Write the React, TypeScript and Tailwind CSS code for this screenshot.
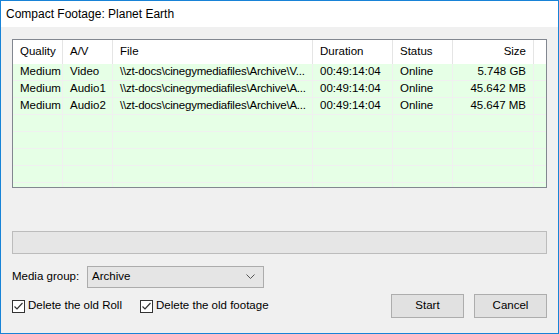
import React from 'react';

const cols = [
  { name: 'Quality', w: 'w-[50px]', right: false },
  { name: 'A/V', w: 'w-[50px]', right: false },
  { name: 'File', w: 'w-[200px]', right: false },
  { name: 'Duration', w: 'w-[80px]', right: false },
  { name: 'Status', w: 'w-[60px]', right: false },
  { name: 'Size', w: 'w-[81px]', right: true },
];

const rows = [
  ['Medium', 'Video', '\\\\zt-docs\\cinegymediafiles\\Archive\\V...', '00:49:14:04', 'Online', '5.748 GB'],
  ['Medium', 'Audio1', '\\\\zt-docs\\cinegymediafiles\\Archive\\A...', '00:49:14:04', 'Online', '45.642 MB'],
  ['Medium', 'Audio2', '\\\\zt-docs\\cinegymediafiles\\Archive\\A...', '00:49:14:04', 'Online', '45.647 MB'],
  ['', '', '', '', '', ''],
  ['', '', '', '', '', ''],
  ['', '', '', '', '', ''],
  ['', '', '', '', '', ''],
  ['', '', '', '', '', ''],
];

function CheckBox({ label, className = '' }: { label: string; className?: string }) {
  return (
    <label className={`flex items-center gap-[3px] whitespace-nowrap ${className}`}>
      <span className="w-[13px] h-[13px] border border-[#333333] bg-white flex items-center justify-center">
        <svg width="11" height="11" viewBox="0 0 11 11">
          <path d="M1.5 5.5 L4 8 L9.5 2" fill="none" stroke="#333333" strokeWidth="1.2" />
        </svg>
      </span>
      <span>{label}</span>
    </label>
  );
}

export default function App() {
  return (
    <div
      className="w-[559px] h-[334px] border border-[#1883d7] flex flex-col text-[11.5px] text-black overflow-hidden"
      style={{ fontFamily: '"Liberation Sans", Arial, sans-serif' }}
    >
      {/* title bar */}
      <div className="h-[26px] bg-white flex items-center px-[5px] text-[12px]">
        Compact Footage: Planet Earth
      </div>

      <div className="flex-1 bg-[#f0f0f0] px-[11px] pt-[12px] flex flex-col">
        {/* list view */}
        <div className="h-[149px] border border-[#828790] bg-[#e6ffe6] overflow-hidden">
          <div className="flex h-[24px] bg-white">
            {cols.map((c) => (
              <div
                key={c.name}
                className={`${c.w} shrink-0 border-r border-[#e5e5e5] flex items-center px-[7px] ${c.right ? 'justify-end' : ''}`}
              >
                {c.name}
              </div>
            ))}
            <div className="flex-1" />
          </div>
          {rows.map((r, i) => (
            <div key={i} className="flex h-[17px] border-b border-[#f0f0f0]">
              {r.map((cell, j) => (
                <div
                  key={j}
                  className={`${cols[j].w} shrink-0 border-r border-[#f0f0f0] flex items-center px-[7px] whitespace-nowrap overflow-hidden ${cols[j].right ? 'justify-end' : ''} ${j === 2 ? 'tracking-[-0.2px]' : ''}`}
                >
                  {cell}
                </div>
              ))}
              <div className="flex-1" />
            </div>
          ))}
        </div>

        {/* progress bar */}
        <div className="mt-[43px] h-[23px] border border-[#bcbcbc] bg-[#e6e6e6]" />

        {/* media group */}
        <div className="mt-[12px] flex items-center h-[22px]">
          <span className="w-[75px] whitespace-nowrap">Media group:</span>
          <div className="w-[177px] h-[22px] border border-[#acacac] bg-[#e5e5e5] flex items-center justify-between pl-[4px] pr-[8px]">
            <span>Archive</span>
            <svg width="9" height="6" viewBox="0 0 9 6">
              <path d="M0.5 0.5 L4.5 4.5 L8.5 0.5" fill="none" stroke="#555555" strokeWidth="1" />
            </svg>
          </div>
        </div>

        {/* bottom row */}
        <div className="mt-[6px] flex items-center justify-between">
          <div className="flex items-center">
            <CheckBox label="Delete the old Roll" className="w-[128px]" />
            <CheckBox label="Delete the old footage" />
          </div>
          <div className="flex gap-[10px]">
            <button className="w-[73px] h-[24px] border border-[#adadad] bg-[#e1e1e1]">Start</button>
            <button className="w-[73px] h-[24px] border border-[#adadad] bg-[#e1e1e1]">Cancel</button>
          </div>
        </div>
      </div>
    </div>
  );
}
